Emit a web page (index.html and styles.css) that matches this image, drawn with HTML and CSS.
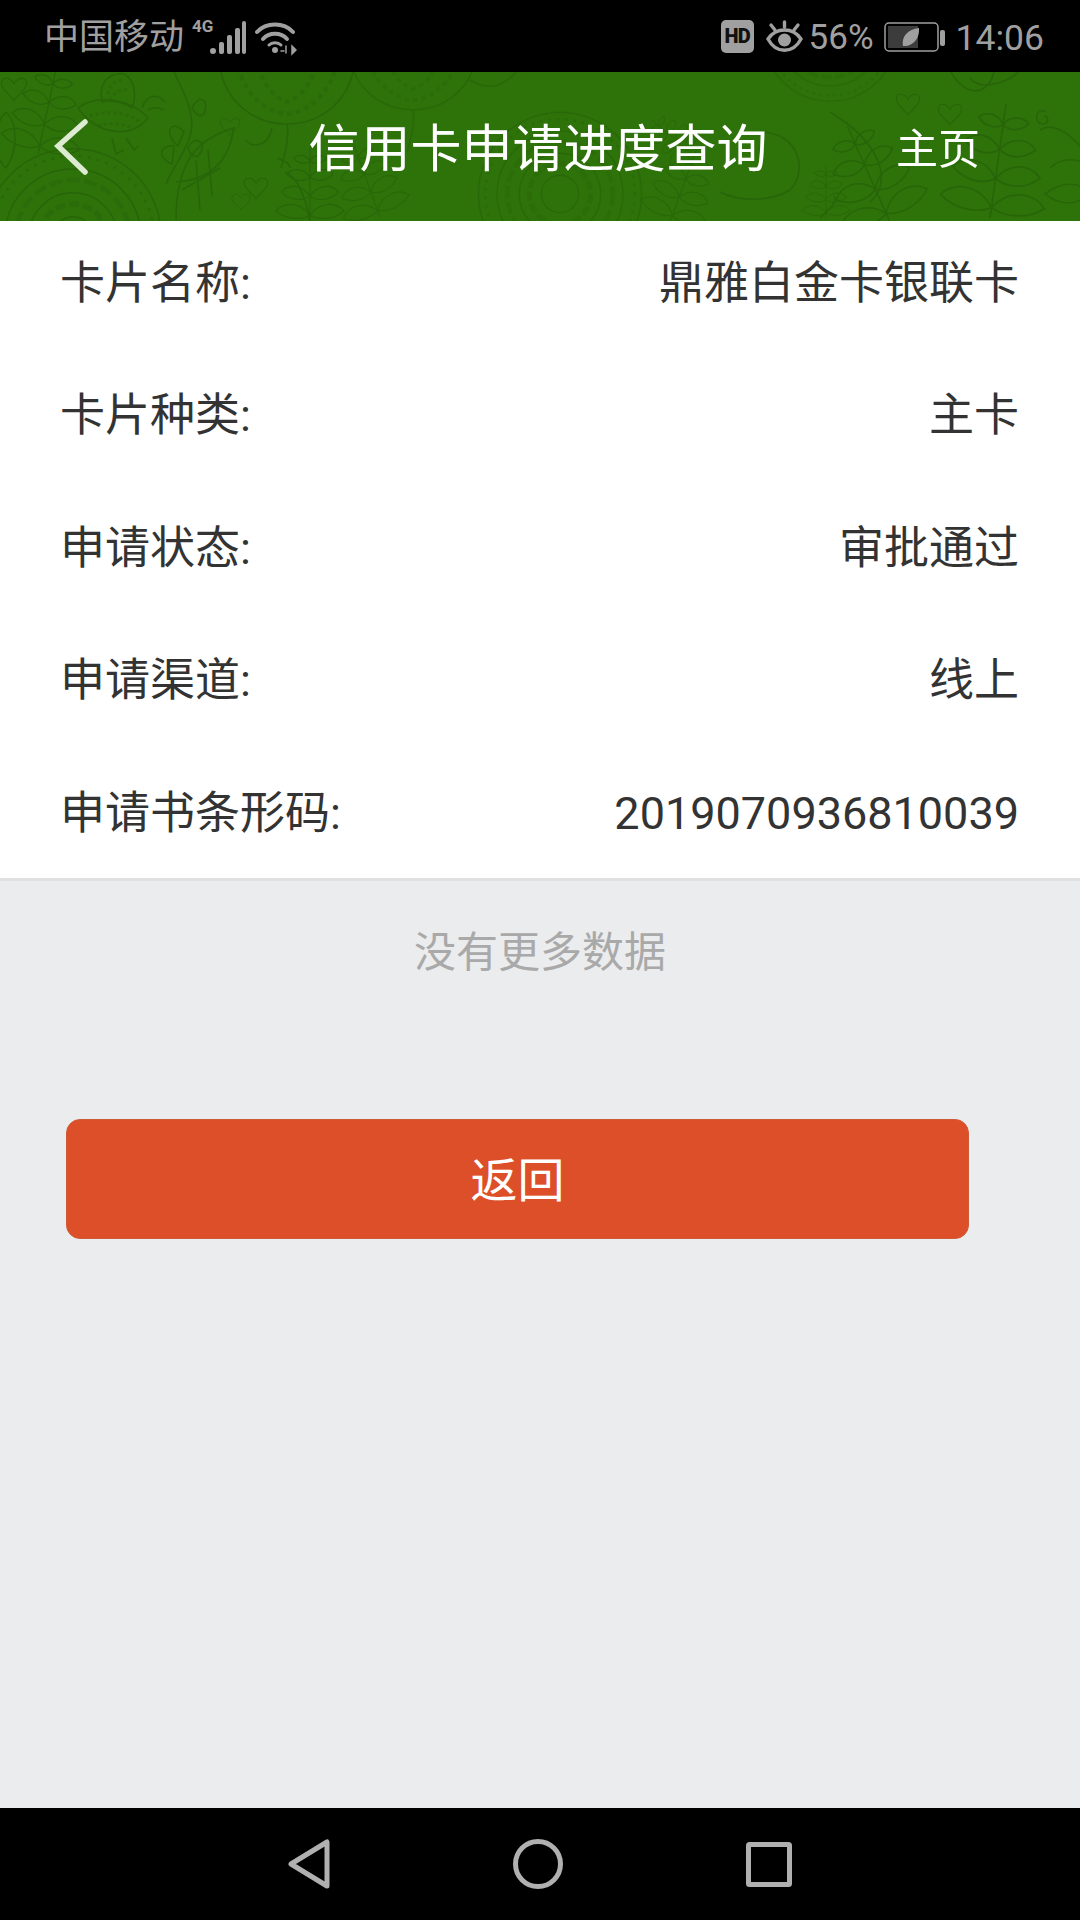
FILE: index.html
```html
<!DOCTYPE html>
<html lang="zh-CN">
	<head>
		<meta charset="UTF-8" />
		<meta name="viewport" content="width=device-width, initial-scale=1.0" />
		<title>信用卡申请进度查询</title>
		<link rel="stylesheet" href="styles.css">
	</head>
	<body>
		<div class="status-bar">
			<div class="status-left">
				<span class="carrier">中国移动</span>
				<span class="net-type">4G</span>
				<svg class="icon-signal" width="36" height="36" viewBox="0 0 36 36">
					<circle cx="3" cy="31" r="3" fill="#a0a0a0" />
					<rect x="9" y="22" width="5" height="12" rx="2" fill="#a0a0a0" />
					<rect x="17" y="15" width="5" height="19" rx="2" fill="#a0a0a0" />
					<rect x="25" y="8" width="5" height="26" rx="2" fill="#a0a0a0" />
					<rect x="32" y="1" width="4" height="33" rx="2" fill="#a0a0a0" />
				</svg>
				<svg class="icon-wifi" width="42" height="36" viewBox="0 0 42 36" fill="none" stroke="#a0a0a0" stroke-width="4" stroke-linecap="round">
					<path d="M2 12C11 2 29 2 38 12" />
					<path d="M8 19C14 12 26 12 32 19" />
					<path d="M14 25C17 22 23 22 26 25" stroke-width="3" />
					<circle cx="20" cy="30" r="3" fill="#a0a0a0" stroke="none" />
					<path d="M31 26V33M26 31H29M37 26L41 30L37 34Z" stroke-width="1.5" fill="#a0a0a0" />
				</svg>
			</div>
			<div class="status-right">
				<span class="hd-badge">HD</span>
				<svg class="icon-eye" width="37" height="33" viewBox="0 0 37 33" fill="none" stroke="#a0a0a0" stroke-width="3.4" stroke-linecap="round">
					<path d="M2 19C10 7 27 7 35 19C27 34 10 34 2 19Z" />
					<circle cx="18.500" cy="20" r="6.500" fill="#a0a0a0" stroke="none" />
					<path d="M18.500 2V7M5 5L9 10M32 5L28 10" />
				</svg>
				<span class="battery-pct">56%</span>
				<svg class="icon-battery" width="62" height="30" viewBox="0 0 62 30">
					<rect x="1" y="1" width="53" height="28" rx="4" fill="none" stroke="#a0a0a0" stroke-width="1.500" />
					<rect x="4" y="4" width="30" height="22" fill="#3c3c3c" />
					<path d="M19 24C17 15 24 7 35 6C36 16 29 25 19 24Z" fill="#a0a0a0" />
					<rect x="56" y="8" width="5" height="16" rx="2" fill="#a0a0a0" />
				</svg>
				<span class="clock">14:06</span>
			</div>
		</div>

		<header class="app-header">
			<svg class="header-pattern" width="1080" height="149" viewBox="0 0 1080 149" fill="none" stroke="#286509" stroke-width="1.600">
				<defs>
					<g id="sprig">
						<path d="M0 0L0 -110" />
						<path d="M0 -10C-14 -30 -38 -30 -50 -16C-36 -4 -14 -2 0 -10Z" />
						<path d="M0 -10C14 -30 38 -30 50 -16C36 -4 14 -2 0 -10Z" />
						<path d="M0 -38C-12 -56 -32 -56 -42 -44C-30 -32 -12 -30 0 -38Z" />
						<path d="M0 -38C12 -56 32 -56 42 -44C30 -32 12 -30 0 -38Z" />
						<path d="M0 -66C-10 -80 -26 -80 -34 -70C-24 -60 -10 -58 0 -66Z" />
						<path d="M0 -66C10 -80 26 -80 34 -70C24 -60 10 -58 0 -66Z" />
						<path d="M0 -90C-6 -100 -18 -100 -24 -94C-18 -86 -6 -84 0 -90Z" />
						<path d="M0 -90C6 -100 18 -100 24 -94C18 -86 6 -84 0 -90Z" />
					</g>
					<path id="heart" d="M0 8C-6 -2 -18 -2 -18 8C-18 16 -6 24 0 32C6 24 18 16 18 8C18 -2 6 -2 0 8Z" />
					<g id="rosette">
						<circle r="96" />
						<circle r="88" stroke-dasharray="3 7" stroke-width="3" opacity="0.700" />
						<circle r="74" />
						<circle r="62" stroke-dasharray="14 5" stroke-width="5" opacity="0.400" />
						<circle r="48" />
						<circle r="36" stroke-dasharray="11 4" stroke-width="6" opacity="0.400" />
						<circle r="22" />
					</g>
					<g id="bulb">
						<path d="M-68 0C-66 42 -34 66 0 66C34 66 66 42 68 0" />
						<path d="M-50 0C-48 30 -24 54 0 56C24 54 48 30 50 0" stroke-dasharray="5 4" stroke-width="4" opacity="0.500" />
						<path d="M-30 0C-28 22 -14 40 0 44C14 40 28 22 30 0" stroke-dasharray="5 4" stroke-width="4" opacity="0.500" />
						<path d="M0 66C2 76 0 90 -6 110" />
					</g>
				</defs>

				<!-- left -->
				<use href="#rosette" transform="translate(73 165) scale(0.920)" />
				<use href="#sprig" transform="translate(38 82) rotate(12) scale(0.800)" />
				<path d="M6 40C18 50 18 80 6 96C-8 84 -8 54 6 40Z" />
				<use href="#heart" transform="translate(14 6) scale(0.700)" />
				<path d="M78 36C96 22 130 26 148 46C130 68 96 62 78 36Z" />
				<path d="M90 44C106 38 128 40 140 50M98 54C110 50 124 52 132 56" stroke-dasharray="3 3" stroke-width="3" opacity="0.600" />
				<path d="M102 30C98 10 110 0 124 2C136 8 136 26 132 36C120 28 110 28 102 30Z" />
				<path d="M108 22C110 12 116 8 124 8M110 28C114 20 122 16 128 18" stroke-dasharray="3 3" stroke-width="3" opacity="0.600" />
				<path d="M142 36C146 24 156 20 165 30M148 38C154 34 160 36 164 38" />
				<path d="M112 66L116 82L124 78M126 66L134 78L138 74" />
				<path d="M174 0C186 24 196 46 190 64C184 84 172 96 166 112" />
				<path d="M192 36C198 22 210 26 204 42C200 46 196 42 192 36Z" />
				<path d="M184 60C172 46 162 60 178 74Z" />
				<path d="M188 76C194 62 210 70 198 84C194 86 190 82 188 76Z" />
				<path d="M174 74C160 72 156 86 172 92Z" />
				<path d="M176 110C232 106 232 60 234 56C200 66 176 86 176 148M196 88L200 138M208 78L212 124M182 118L220 96" />
				<use href="#heart" transform="translate(230 46) scale(0.550)" />
				<use href="#heart" transform="translate(256 106) scale(0.650)" />
				<use href="#heart" transform="translate(241 122) scale(0.500)" />
				<path d="M246 68C250 76 268 76 272 56" />
				<use href="#bulb" x="287" y="-14" />
				<path d="M285 100C296 104 304 120 310 148M278 86C284 90 290 90 290 96" />
				<use href="#sprig" transform="translate(310 150) scale(0.680)" />

				<!-- middle -->
				<g opacity="0.700">
					<use href="#bulb" transform="translate(413 -25) scale(0.950)" />
					<use href="#sprig" transform="translate(380 145) rotate(-20) scale(0.700)" />
					<use href="#rosette" transform="translate(560 122) scale(0.850)" />
					<use href="#sprig" transform="translate(690 80) rotate(-50) scale(0.450)" />
					<use href="#sprig" transform="translate(670 150) rotate(20) scale(0.700)" />
					<path d="M470 8C490 20 504 14 518 -2" />
					<use href="#rosette" transform="translate(830 -38) scale(0.700)" />
				</g>

				<!-- right -->
				<path d="M760 60C800 60 808 100 790 118C770 130 740 130 720 120" />
				<use href="#sprig" transform="translate(826 146) scale(0.480)" />
				<path d="M820 146C830 136 838 130 834 124" />
				<path d="M870 130C894 110 880 70 830 40" />
				<use href="#sprig" transform="translate(890 150) rotate(-24) scale(0.950)" />
				<use href="#heart" transform="translate(908 22) scale(0.650)" />
				<use href="#heart" transform="translate(950 32) scale(0.650)" />
				<use href="#sprig" transform="translate(990 146) rotate(8) scale(1.050)" />
				<path d="M950 -2C960 20 986 30 994 0" />
				<path d="M1020 -2C1010 10 980 20 970 6" />
				<path d="M1045 122C1062 108 1082 110 1090 122C1076 134 1060 134 1045 122Z" />
				<path d="M1050 96C1062 84 1082 86 1090 96" />
				<path d="M1040 58C1052 50 1068 60 1082 76" />
				<path d="M1046 40C1036 34 1032 52 1044 52C1050 50 1048 44 1044 44" />
			</svg>
			<a class="back-link" aria-label="返回">
				<svg width="36" height="56" viewBox="0 0 36 56" fill="none" stroke="#dcebd2" stroke-width="5.500" stroke-linecap="round">
					<path d="M31 3L4 27L31 53" />
				</svg>
			</a>
			<h1 class="page-title">信用卡申请进度查询</h1>
			<a class="home-link">主页</a>
		</header>

		<main class="content">
			<section class="info-list">
				<div class="info-row"><span>卡片名称:</span><span>鼎雅白金卡银联卡</span></div>
				<div class="info-row"><span>卡片种类:</span><span>主卡</span></div>
				<div class="info-row"><span>申请状态:</span><span>审批通过</span></div>
				<div class="info-row"><span>申请渠道:</span><span>线上</span></div>
				<div class="info-row"><span>申请书条形码:</span><span>2019070936810039</span></div>
			</section>
			<p class="no-more">没有更多数据</p>
			<button type="button" class="return-btn">返回</button>
		</main>

		<nav class="nav-bar">
			<svg width="42" height="50" viewBox="0 0 42 50" fill="none" stroke="#b0b0b0" stroke-width="5" stroke-linejoin="round">
				<path d="M39 3V47L3 25Z" />
			</svg>
			<svg width="50" height="50" viewBox="0 0 50 50" fill="none" stroke="#b0b0b0" stroke-width="5">
				<circle cx="25" cy="25" r="22.500" />
			</svg>
			<svg width="46" height="45" viewBox="0 0 46 45" fill="none" stroke="#b0b0b0" stroke-width="5" stroke-linejoin="round">
				<rect x="2.500" y="2.500" width="41" height="40" rx="1" />
			</svg>
		</nav>
	</body>
</html>
```

FILE: styles.css
```css
/* base */
* {
	box-sizing: border-box;
}

body {
	margin: 0;
	width: 1080px;
	height: 1920px;
	display: flex;
	flex-direction: column;
	overflow: hidden;
	background-color: #ebecee;
	font-family: 'Roboto', 'Noto Sans CJK SC', sans-serif;
}

/* status bar */
.status-bar {
	height: 72px;
	flex-shrink: 0;
	background-color: #000;
	color: #a0a0a0;
	display: flex;
	justify-content: space-between;
	align-items: center;
	padding: 3px 36px 0 44px;
}

.status-left,
.status-right {
	display: flex;
	align-items: center;
}

.carrier {
	font-size: 35px;
	line-height: 60px;
}

.net-type {
	font-size: 17px;
	font-weight: 700;
	line-height: 17px;
	margin: -22px -2px 0 8px;
	width: 20px;
}

.icon-wifi {
	margin-left: 9px;
}

.hd-badge {
	width: 33px;
	height: 33px;
	margin-top: -2px;
	border-radius: 5px;
	background-color: #a0a0a0;
	color: #111;
	font-size: 20px;
	font-weight: 900;
	line-height: 33px;
	text-align: center;
	letter-spacing: -1px;
}

.icon-eye {
	margin-left: 12px;
	margin-top: -2px;
}

.battery-pct {
	font-size: 35px;
	line-height: 60px;
	margin-left: 6px;
}

.icon-battery {
	margin-left: 10px;
	margin-top: -2px;
}

.clock {
	font-size: 35.500px;
	line-height: 60px;
	margin-left: 10px;
}

/* header */
.app-header {
	position: relative;
	height: 149px;
	flex-shrink: 0;
	overflow: hidden;
	background-color: #2e720a;
	color: #fff;
	display: grid;
	grid-template-columns: 1fr auto 1fr;
	align-items: center;
}

.header-pattern {
	position: absolute;
	top: 0;
	left: 0;
}

.back-link,
.page-title,
.home-link {
	position: relative;
}

.back-link {
	padding-left: 54px;
	height: 56px;
}

.back-link svg {
	display: block;
}

.page-title {
	margin: 6px 0 0;
	font-size: 51px;
	font-weight: 400;
	line-height: 70px;
	transform: translateX(-2px);
}

.home-link {
	justify-self: end;
	margin: 6px 100px 0 0;
	font-size: 42px;
	line-height: 60px;
}

/* list */
.content {
	flex: 1;
}

.info-list {
	background-color: #fff;
	border-bottom: 3px solid #e0e0e0;
	padding: 0.500px 61px 2.500px 60px;
	display: grid;
	row-gap: 8.500px;
}

.info-row {
	height: 124px;
	display: flex;
	justify-content: space-between;
	align-items: center;
	font-size: 45px;
	line-height: 60px;
	color: #333;
}

.no-more {
	margin: 42px 0 0;
	font-size: 42px;
	line-height: 60px;
	text-align: center;
	color: #a9a9a9;
}

.return-btn {
	display: block;
	width: 903px;
	height: 120px;
	margin: 136px 0 0 66px;
	padding: 0 0 6px;
	border: 1px solid #cf5a37;
	border-radius: 14px;
	background-color: #dc4f28;
	color: #fff;
	font-family: inherit;
	font-size: 47px;
}

/* bottom nav */
.nav-bar {
	height: 112px;
	flex-shrink: 0;
	background-color: #000;
	display: flex;
	justify-content: center;
	align-items: center;
	gap: 183px;
}
```
